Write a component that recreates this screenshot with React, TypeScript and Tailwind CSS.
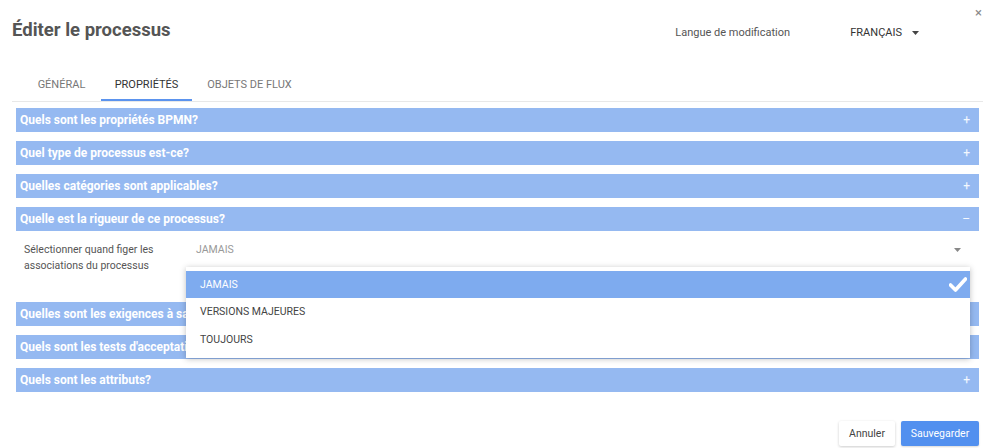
import { useState } from "react";

type Section = {
  id: string;
  title: string;
};

const sections: Section[] = [
  { id: "bpmn", title: "Quels sont les propriétés BPMN?" },
  { id: "type", title: "Quel type de processus est-ce?" },
  { id: "cat", title: "Quelles catégories sont applicables?" },
  { id: "rigueur", title: "Quelle est la rigueur de ce processus?" },
  { id: "exig", title: "Quelles sont les exigences à satisfaire?" },
  { id: "tests", title: "Quels sont les tests d'acceptation?" },
  { id: "attr", title: "Quels sont les attributs?" },
];

const options = ["JAMAIS", "VERSIONS MAJEURES", "TOUJOURS"];

const tabs = [
  { label: "GÉNÉRAL", width: "w-[79px]" },
  { label: "PROPRIÉTÉS", width: "w-[91px]" },
  { label: "OBJETS DE FLUX", width: "w-[115px]" },
];

function Caret({ className }: { className?: string }) {
  return (
    <svg width="7" height="4" viewBox="0 0 7 4" className={className}>
      <path d="M0 0 L7 0 L3.5 4 Z" fill="currentColor" />
    </svg>
  );
}

function Check() {
  return (
    <svg width="18" height="15" viewBox="0 0 18 15">
      <path
        d="M1.5 8 L6.5 13 L16.5 2"
        fill="none"
        stroke="white"
        strokeWidth="3.6"
        strokeLinecap="round"
        strokeLinejoin="round"
      />
    </svg>
  );
}

export default function App() {
  const [activeTab, setActiveTab] = useState(1);
  const [open, setOpen] = useState("rigueur");
  const [value, setValue] = useState("JAMAIS");

  return (
    <div className="relative h-[448px] w-[1000px] overflow-hidden bg-white font-['Roboto',sans-serif]">
      <button className="absolute right-[18px] top-[6px] text-[13px] leading-none text-[#888]">
        ×
      </button>

      <header className="flex h-[62px] items-center pl-[12px]">
        <h1 className="text-[18.5px] font-bold text-[#555]">Éditer le processus</h1>
        <div className="ml-auto flex items-center pr-[81px] pt-[4px]">
          <span className="w-[175px] text-[11px] text-[#555]">Langue de modification</span>
          <span className="text-[11px] text-[#333]">FRANÇAIS</span>
          <Caret className="ml-[10px] text-[#444]" />
        </div>
      </header>

      <nav className="ml-[12px] mr-[17px] flex border-b border-[#e8e8e8] pl-[10px]">
        {tabs.map((tab, i) => (
          <button
            key={tab.label}
            onClick={() => setActiveTab(i)}
            className={
              i === activeTab
                ? `${tab.width} h-[39px] border-b-2 border-[#5b93ee] pt-[9px] text-center text-[11px] text-[#333]`
                : `${tab.width} h-[39px] border-b-2 border-transparent pt-[9px] text-center text-[11px] text-[#777]`
            }
          >
            {tab.label}
          </button>
        ))}
      </nav>

      <div className="ml-[16px] mr-[21px] mt-[6px] flex flex-col gap-[9px]">
        {sections.map((s) => (
          <div key={s.id}>
            <button
              onClick={() => setOpen(open === s.id ? "" : s.id)}
              className="flex h-[24px] w-full items-center bg-[#95b9f1] pl-[4px] pr-[9px] text-left"
            >
              <span className="text-[12px] font-bold text-white">{s.title}</span>
              <span className="ml-auto text-[12px] text-white/90">
                {open === s.id ? "–" : "+"}
              </span>
            </button>
            {open === s.id ? (
              <div className="relative flex h-[62px] pl-[8px] pt-[11px]">
                <p className="w-[172px] text-[10.5px] leading-[16px] text-[#555]">
                  Sélectionner quand figer les associations du processus
                </p>
                <div className="flex h-[16px] flex-1 items-center pr-[18px]">
                  <span className="text-[10.5px] text-[#999]">{value}</span>
                  <Caret className="ml-auto text-[#888]" />
                </div>
                <div className="absolute left-[170px] top-[36px] z-10 w-[784px] bg-white pt-[4px] shadow-[0_1px_6px_rgba(0,0,0,0.25)]">
                  {options.map((o) => (
                    <div
                      key={o}
                      onClick={() => setValue(o)}
                      className={
                        o === value
                          ? "flex h-[27px] items-center bg-[#7eabef] pl-[14px] pr-[3px] text-[10.5px] text-white"
                          : "flex h-[28px] items-center pl-[14px] text-[10.5px] text-[#444]"
                      }
                    >
                      <span>{o}</span>
                      {o === value ? (
                        <span className="ml-auto">
                          <Check />
                        </span>
                      ) : null}
                    </div>
                  ))}
                  <div className="h-[4px]" />
                </div>
              </div>
            ) : null}
          </div>
        ))}
      </div>

      <footer className="mt-[29px] flex justify-end gap-[6px] pr-[21px]">
        <button className="h-[25px] w-[56px] rounded-[2px] bg-white text-[10.5px] text-[#444] shadow-[0_1px_3px_rgba(0,0,0,0.2)]">
          Annuler
        </button>
        <button className="h-[25px] w-[78px] rounded-[2px] bg-[#5290ef] text-[10.5px] text-white shadow-[0_1px_2px_rgba(0,0,0,0.15)]">
          Sauvegarder
        </button>
      </footer>
    </div>
  );
}
